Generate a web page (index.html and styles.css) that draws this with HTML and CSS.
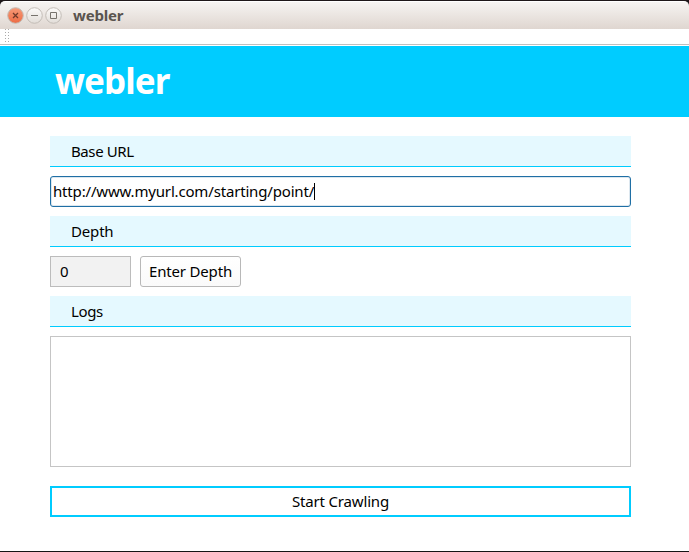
FILE: index.html
```html
<!DOCTYPE html>
<html lang="en">
<head>
<meta charset="utf-8">
<title>webler</title>
<link rel="stylesheet" href="styles.css">
</head>
<body>
<div class="window">
  <div class="titlebar">
    <svg class="controls" width="56" height="18" viewBox="0 0 56 18">
      <defs>
        <linearGradient id="close" x1="0" y1="0" x2="0" y2="1"><stop offset="0" stop-color="#f79a78"/><stop offset="1" stop-color="#ed6b43"/></linearGradient>
        <linearGradient id="plain" x1="0" y1="0" x2="0" y2="1"><stop offset="0" stop-color="#fcfbfa"/><stop offset="1" stop-color="#e2ddd8"/></linearGradient>
      </defs>
      <g stroke="#c3bdb7">
        <circle cx="8.5" cy="8.5" r="7.8" fill="url(#close)"/>
        <circle cx="27.5" cy="8.5" r="7.8" fill="url(#plain)"/>
        <circle cx="46.5" cy="8.5" r="7.8" fill="url(#plain)"/>
      </g>
      <path d="M6 6l5 5M11 6l-5 5" stroke="#71392a" stroke-width="1.3" fill="none"/>
      <path d="M24 8.5h7M43.5 5.5h6v6h-6z" stroke="#77736d" fill="none"/>
    </svg>
    <span class="title">webler</span>
  </div>
  <div class="toolbar"><span class="grip"></span></div>
  <h1 class="banner">webler</h1>
  <main class="form">
    <div class="label base">Base URL</div>
    <div class="url"><span>http://www.myurl.com/starting/point/</span><i class="caret"></i></div>
    <div class="label">Depth</div>
    <div class="row">
      <div class="depth">0</div>
      <div class="enter">Enter Depth</div>
    </div>
    <div class="label logs-label">Logs</div>
    <div class="logs"></div>
    <div class="start">Start Crawling</div>
  </main>
</div>
</body>
</html>
```
FILE: styles.css
```css
* { box-sizing: border-box; }
body { margin: 0; background: #1d1719; font: 15px/20px "Noto Sans", sans-serif; letter-spacing: -.17px; color: #000; }
.window { height: 552px; padding-top: 1px; border-bottom: 1px solid #151515; display: flex; flex-direction: column; }
.titlebar { height: 28px; flex: none; display: flex; align-items: center; padding: 1px 0 0 7px; border-radius: 5px 5px 0 0; background: linear-gradient(#f6f4f2, #dfd6d0); border-top: 1px solid #fff; }
.controls { display: block; flex: none; }
.title { margin-left: 10px; padding-bottom: 2px; font-weight: 700; color: #59544f; }
.toolbar { height: 17px; flex: none; background: #fff; padding-left: 5px; box-shadow: inset 0 -1px #fff, inset 0 -2px #bfbfbf; }
.grip { display: block; width: 4px; height: 15px; background: radial-gradient(circle at .5px .5px, #aaa .6px, transparent .8px) 0 0 / 3px 3px; }
.banner { margin: 0; height: 71px; flex: none; background: #0cf; color: #fff; font-size: 35px; letter-spacing: -.9px; line-height: 70px; padding-left: 55px; }
.form { flex: 1; background: #fff; padding: 19px 58px 0 50px; }
.label { height: 31px; margin-bottom: 9px; padding: 5px 0 0 21px; background: #e5f9ff; border-bottom: 1px solid #0cf; }
.base { letter-spacing: -.4px; }
.logs-label { letter-spacing: -.35px; }
.url { height: 31px; margin-bottom: 9px; padding: 0 0 2px 2px; display: flex; align-items: center; border: 1px solid #1f6fa5; border-radius: 3px; background: #fff; box-shadow: inset 0 0 0 1px #dce7ef; }
.caret { width: 1px; height: 17px; margin-top: 2px; background: #000; }
.row { display: flex; gap: 9px; margin-bottom: 9px; }
.depth { width: 81px; height: 31px; padding: 4px 9px; border: 1px solid #bcbcbc; background: #f2f2f2; }
.enter { width: 101px; height: 31px; padding-bottom: 2px; display: flex; align-items: center; justify-content: center; border: 1px solid #b8b8b8; border-radius: 3px; background: linear-gradient(#fff, #fafafa); }
.logs { height: 131px; margin-bottom: 19px; border: 1px solid #c5c5c5; }
.start { height: 31px; padding-bottom: 2px; display: flex; align-items: center; justify-content: center; border: 2px solid #0cf; }
```
